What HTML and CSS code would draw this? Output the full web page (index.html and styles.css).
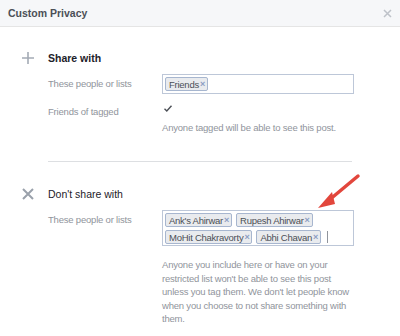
FILE: index.html
```html
<!DOCTYPE html>
<html lang="en">
<head>
    <meta charset="UTF-8">
    <title>Custom Privacy</title>
    <link rel="stylesheet" href="styles.css">
</head>
<body>
    <div class="dialog">
        <div class="header">
            <span class="title">Custom Privacy</span>
            <svg class="close" width="9" height="9" viewBox="0 0 9 9"><path d="M1 1L8 8M8 1L1 8" stroke="#bec2c9" stroke-width="1.5"/></svg>
        </div>

        <div class="section first">
            <div class="section-title">
                <svg class="section-icon" width="12" height="12" viewBox="0 0 12 12"><path d="M6 0V12M0 6H12" stroke="#a4abb5" stroke-width="1.6"/></svg>
                <span>Share with</span>
            </div>
            <div class="row">
                <div class="label">These people or lists</div>
                <div class="field">
                    <div class="token-box">
                        <span class="token">Friends <i>×</i></span>
                    </div>
                </div>
            </div>
            <div class="row">
                <div class="label">Friends of tagged</div>
                <div class="field">
                    <svg class="check" width="10" height="9" viewBox="0 0 10 9"><path d="M1.5 4.8L3.8 7L8.5 1.8" fill="none" stroke="#4b4f56" stroke-width="1.4"/></svg>
                    <p class="hint">Anyone tagged will be able to see this post.</p>
                </div>
            </div>
        </div>

        <div class="divider"></div>

        <div class="section">
            <div class="section-title dont">
                <svg class="section-icon" width="12" height="12" viewBox="0 0 12 12"><path d="M1 1L11 11M11 1L1 11" stroke="#9aa1ab" stroke-width="2"/></svg>
                <span>Don't share with</span>
            </div>
            <div class="row">
                <div class="label">These people or lists</div>
                <div class="field">
                    <div class="token-box multi">
                        <span class="token">Ank's Ahirwar <i>×</i></span>
                        <span class="token">Rupesh Ahirwar <i>×</i></span>
                        <span class="token">MoHit Chakravorty <i>×</i></span>
                        <span class="token">Abhi Chavan <i>×</i></span>
                        <span class="caret"></span>
                    </div>
                    <p class="hint long">Anyone you include here or have on your<br>restricted list won't be able to see this post<br>unless you tag them. We don't let people know<br>when you choose to not share something with<br>them.</p>
                </div>
            </div>
        </div>

        <svg class="arrow" width="50" height="44" viewBox="0 0 50 44">
            <path d="M44 5L14 30" stroke="#e2463c" stroke-width="3.5" stroke-linecap="round"/>
            <path d="M4 37L18 21L21 33Z" fill="#e2463c"/>
        </svg>
    </div>
</body>
</html>
```

FILE: styles.css
```css
* {
    margin: 0;
    padding: 0;
    box-sizing: border-box;
    font-family: 'Liberation Sans', Arial, sans-serif;
}

body {
    background: #ffffff;
    width: 400px;
    height: 336px;
    overflow: hidden;
}

.dialog {
    position: relative;
    height: 336px;
}

.header {
    display: flex;
    justify-content: space-between;
    align-items: center;
    height: 27px;
    padding: 0 8px;
    background: #f6f7f9;
    border-bottom: 1px solid #e5e5e5;
}

.title {
    font-size: 10.5px;
    font-weight: bold;
    color: #4b4f56;
}

.section {
    padding-left: 48px;
}

.section.first {
    padding-top: 23px;
}

.section-title {
    position: relative;
    display: flex;
    align-items: center;
    height: 16px;
    font-size: 10.5px;
    font-weight: bold;
    color: #1d2129;
    margin-bottom: 8px;
}

.section-title.dont {
    font-weight: normal;
    font-size: 10.5px;
    color: #1d2129;
}

.section-icon {
    position: absolute;
    left: -26px;
    top: 2px;
}

.row {
    display: grid;
    grid-template-columns: 114px 192px;
    align-items: start;
    margin-bottom: 8px;
}

.label {
    font-size: 9.5px;
    letter-spacing: -0.2px;
    color: #90949c;
    line-height: 20px;
}

.token-box {
    display: flex;
    flex-wrap: wrap;
    align-items: center;
    gap: 3px 4px;
    border: 1px solid #bdc7d8;
    padding: 2px;
    min-height: 20px;
}

.token-box.multi {
    padding: 2px 2px 1px 2px;
}

.token {
    display: inline-flex;
    align-items: center;
    height: 14px;
    padding: 0 2px 0 3px;
    background: #e9ebee;
    border: 1px solid #a7b6cf;
    border-radius: 2px;
    font-size: 9.5px;
    letter-spacing: -0.25px;
    color: #4b4f56;
    white-space: nowrap;
}

.token i {
    font-style: normal;
    font-weight: bold;
    color: #8b9dc3;
    margin-left: 1px;
    font-size: 9px;
}

.caret {
    display: inline-block;
    width: 1px;
    height: 12px;
    background: #90949c;
    margin-left: 2px;
}

.check {
    display: block;
    margin-top: 2px;
    margin-left: 1px;
}

.hint {
    font-size: 9.5px;
    letter-spacing: -0.2px;
    color: #90949c;
    line-height: 13px;
    margin-top: 8px;
}

.hint.long {
    margin-top: 12px;
    line-height: 13.5px;
}

.divider {
    height: 1px;
    background: #dddfe2;
    margin: 27px 48px 24px 48px;
    width: 304px;
}

.arrow {
    position: absolute;
    left: 314px;
    top: 171px;
}
```
